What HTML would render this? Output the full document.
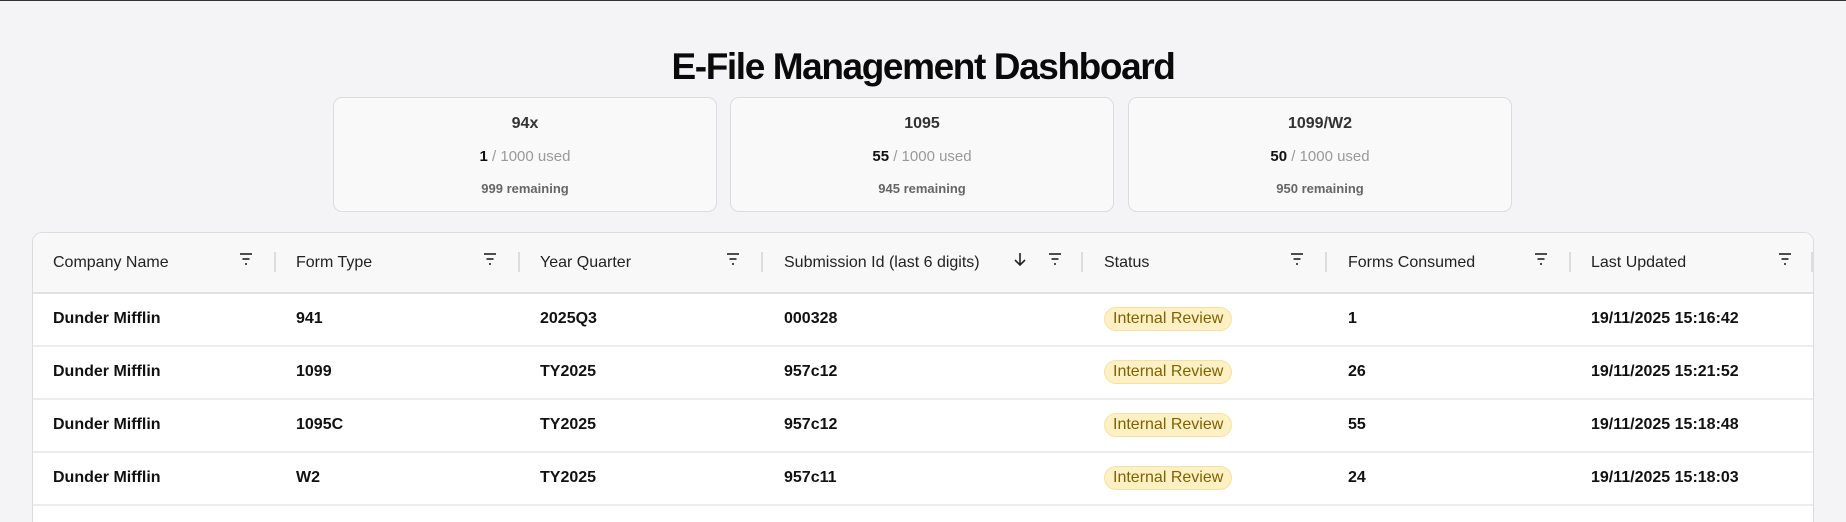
<!DOCTYPE html>
<html style="height:522px;overflow:hidden"><head><meta charset="utf-8"><style>
*{box-sizing:border-box;margin:0;padding:0}
body{width:1846px;height:522px;background:#f4f4f6;font-family:"Liberation Sans",sans-serif;color:#111;overflow:hidden;border-top:1px solid #333;position:relative}
h1{position:absolute;top:45px;left:0;width:1846px;text-align:center;font-size:37px;font-weight:bold;letter-spacing:-1.4px;color:#0a0a0a}
.card{position:absolute;top:96px;width:384px;height:115px;background:#f9f9fa;border:1px solid #dcdcdf;border-radius:9px;text-align:center}
.card .t{position:absolute;top:17px;width:100%;font-size:16px;font-weight:bold;color:#333}
.card .u{position:absolute;top:50px;width:100%;font-size:15px;color:#999}
.card .u b{color:#111}
.card .r{position:absolute;top:83px;width:100%;font-size:13px;font-weight:bold;color:#666}
.tbl{position:absolute;left:32px;top:231px;width:1782px;height:290px;background:#fff;border:1px solid #dcdcdf;border-bottom:none;border-radius:10px 10px 0 0;overflow:hidden}
.hd{position:absolute;left:0;top:0;width:100%;height:61px;background:#f8f8f9;border-bottom:2px solid #e2e2e4}
.row{position:absolute;left:0;width:100%;height:53px;border-bottom:2px solid #ececee}
.c{position:absolute;font-size:16px;white-space:nowrap}
.hd .c{top:21px;color:#222}
.row .c{top:16px;font-weight:bold}
.sep{position:absolute;top:19px;width:2px;height:20px;background:#ddd}
.fi{position:absolute;top:20px;width:14px;height:12px}
.row .badge{position:absolute;top:13px;height:24px;padding:0 8px;background:#fdf0c5;border:1px solid #f6e2a0;border-radius:12px;color:#7d6300;font-size:16px;line-height:22px;font-weight:normal}
</style></head><body>
<h1>E-File Management Dashboard</h1>
<div class="card" style="left:333px"><div class="t">94x</div><div class="u"><b>1</b> / 1000 used</div><div class="r">999 remaining</div></div>
<div class="card" style="left:730px"><div class="t">1095</div><div class="u"><b>55</b> / 1000 used</div><div class="r">945 remaining</div></div>
<div class="card" style="left:1128px"><div class="t">1099/W2</div><div class="u"><b>50</b> / 1000 used</div><div class="r">950 remaining</div></div>
<div class="tbl">
<div class="hd">
<div class="c" style="left:20px">Company Name</div>
<div class="c" style="left:263px">Form Type</div>
<div class="c" style="left:507px">Year Quarter</div>
<div class="c" style="left:751px">Submission Id (last 6 digits)</div>
<div class="c" style="left:1071px">Status</div>
<div class="c" style="left:1315px">Forms Consumed</div>
<div class="c" style="left:1558px">Last Updated</div>
<svg class="fi" style="left:980px;top:18px;width:14px;height:16px" viewBox="0 0 14 16"><path d="M7 2v12M2 9l5 5 5-5" stroke="#222" stroke-width="1.6" fill="none"/></svg>
<svg class="fi" style="left:206px" viewBox="0 0 14 12"><path d="M1 1h12M3.5 6h7M6 11h2" stroke="#333" stroke-width="1.8"/></svg>
<svg class="fi" style="left:450px" viewBox="0 0 14 12"><path d="M1 1h12M3.5 6h7M6 11h2" stroke="#333" stroke-width="1.8"/></svg>
<svg class="fi" style="left:693px" viewBox="0 0 14 12"><path d="M1 1h12M3.5 6h7M6 11h2" stroke="#333" stroke-width="1.8"/></svg>
<svg class="fi" style="left:1015px" viewBox="0 0 14 12"><path d="M1 1h12M3.5 6h7M6 11h2" stroke="#333" stroke-width="1.8"/></svg>
<svg class="fi" style="left:1257px" viewBox="0 0 14 12"><path d="M1 1h12M3.5 6h7M6 11h2" stroke="#333" stroke-width="1.8"/></svg>
<svg class="fi" style="left:1501px" viewBox="0 0 14 12"><path d="M1 1h12M3.5 6h7M6 11h2" stroke="#333" stroke-width="1.8"/></svg>
<svg class="fi" style="left:1745px" viewBox="0 0 14 12"><path d="M1 1h12M3.5 6h7M6 11h2" stroke="#333" stroke-width="1.8"/></svg>
<div class="sep" style="left:241px"></div><div class="sep" style="left:485px"></div><div class="sep" style="left:728px"></div><div class="sep" style="left:1048px"></div><div class="sep" style="left:1292px"></div><div class="sep" style="left:1536px"></div><div class="sep" style="left:1778px"></div>
</div>
<div class="row" style="top:61px"><div class="c" style="left:20px">Dunder Mifflin</div><div class="c" style="left:263px">941</div><div class="c" style="left:507px">2025Q3</div><div class="c" style="left:751px">000328</div><div class="c badge" style="left:1071px">Internal Review</div><div class="c" style="left:1315px">1</div><div class="c" style="left:1558px">19/11/2025 15:16:42</div></div>
<div class="row" style="top:114px"><div class="c" style="left:20px">Dunder Mifflin</div><div class="c" style="left:263px">1099</div><div class="c" style="left:507px">TY2025</div><div class="c" style="left:751px">957c12</div><div class="c badge" style="left:1071px">Internal Review</div><div class="c" style="left:1315px">26</div><div class="c" style="left:1558px">19/11/2025 15:21:52</div></div>
<div class="row" style="top:167px"><div class="c" style="left:20px">Dunder Mifflin</div><div class="c" style="left:263px">1095C</div><div class="c" style="left:507px">TY2025</div><div class="c" style="left:751px">957c12</div><div class="c badge" style="left:1071px">Internal Review</div><div class="c" style="left:1315px">55</div><div class="c" style="left:1558px">19/11/2025 15:18:48</div></div>
<div class="row" style="top:220px"><div class="c" style="left:20px">Dunder Mifflin</div><div class="c" style="left:263px">W2</div><div class="c" style="left:507px">TY2025</div><div class="c" style="left:751px">957c11</div><div class="c badge" style="left:1071px">Internal Review</div><div class="c" style="left:1315px">24</div><div class="c" style="left:1558px">19/11/2025 15:18:03</div></div>
</div>
</body></html>
